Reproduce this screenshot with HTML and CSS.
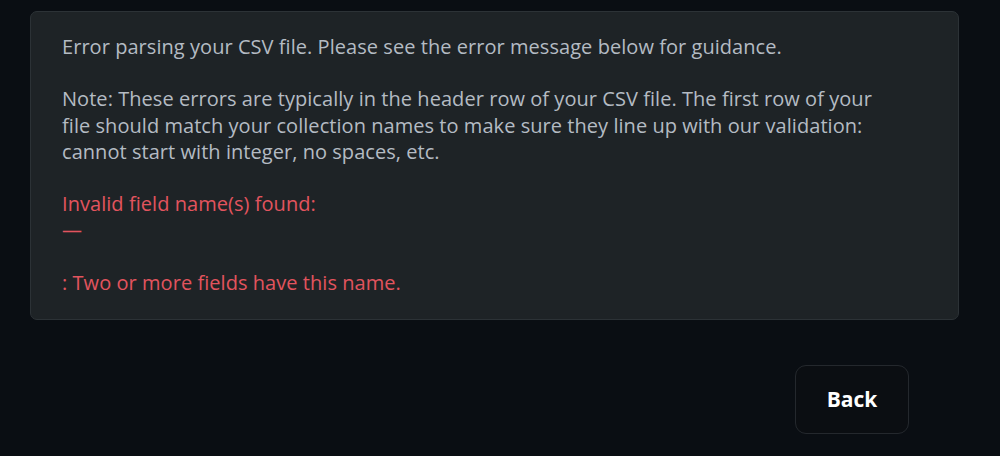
FILE: index.html
```html
<!DOCTYPE html>
<html lang="en">
<head>
<meta charset="utf-8">
<title>CSV import error</title>
<link rel="stylesheet" href="styles.css">
</head>
<body>
<main class="page">
  <section class="error-panel">
    <p class="msg">Error parsing your CSV file. Please see the error message below for guidance.</p>
    <p class="msg">Note: These errors are typically in the header row of your CSV file. The first row of your<br>file should match your collection names to make sure they line up with our validation:<br>cannot start with integer, no spaces, etc.</p>
    <p class="msg err">Invalid field name(s) found:<br>—</p>
    <p class="msg err">: Two or more fields have this name.</p>
  </section>
  <div class="actions">
    <button class="btn-back" type="button">Back</button>
  </div>
</main>
</body>
</html>
```

FILE: styles.css
```css
html, body {
  margin: 0;
  padding: 0;
  background: #0a0e13;
  height: 100%;
}
.page {
  padding: 11px 41px 0 30px;
  font-family: "Open Sans", "Liberation Sans", sans-serif;
}
.error-panel {
  background: #1e2326;
  border: 1px solid #2c3236;
  border-radius: 7px;
  padding: 22px 31px 23px 31px;
  display: flex;
  flex-direction: column;
  gap: 26.2px;
}
.msg {
  margin: 0;
  font-size: 20px;
  font-weight: 500;
  letter-spacing: 0.05px;
  line-height: 26.2px;
  color: #b4bbc3;
  white-space: nowrap;
}
.msg.err {
  color: #e2545e;
}
.actions {
  display: flex;
  justify-content: flex-end;
  margin-top: 45px;
  padding-right: 50px;
}
.btn-back {
  width: 114px;
  height: 69px;
  background: #0b0e12;
  border: 1.5px solid #24282d;
  border-radius: 11px;
  color: #ffffff;
  font-family: "Open Sans", "Liberation Sans", sans-serif;
  font-weight: 700;
  font-size: 21px;
  cursor: pointer;
}
```
